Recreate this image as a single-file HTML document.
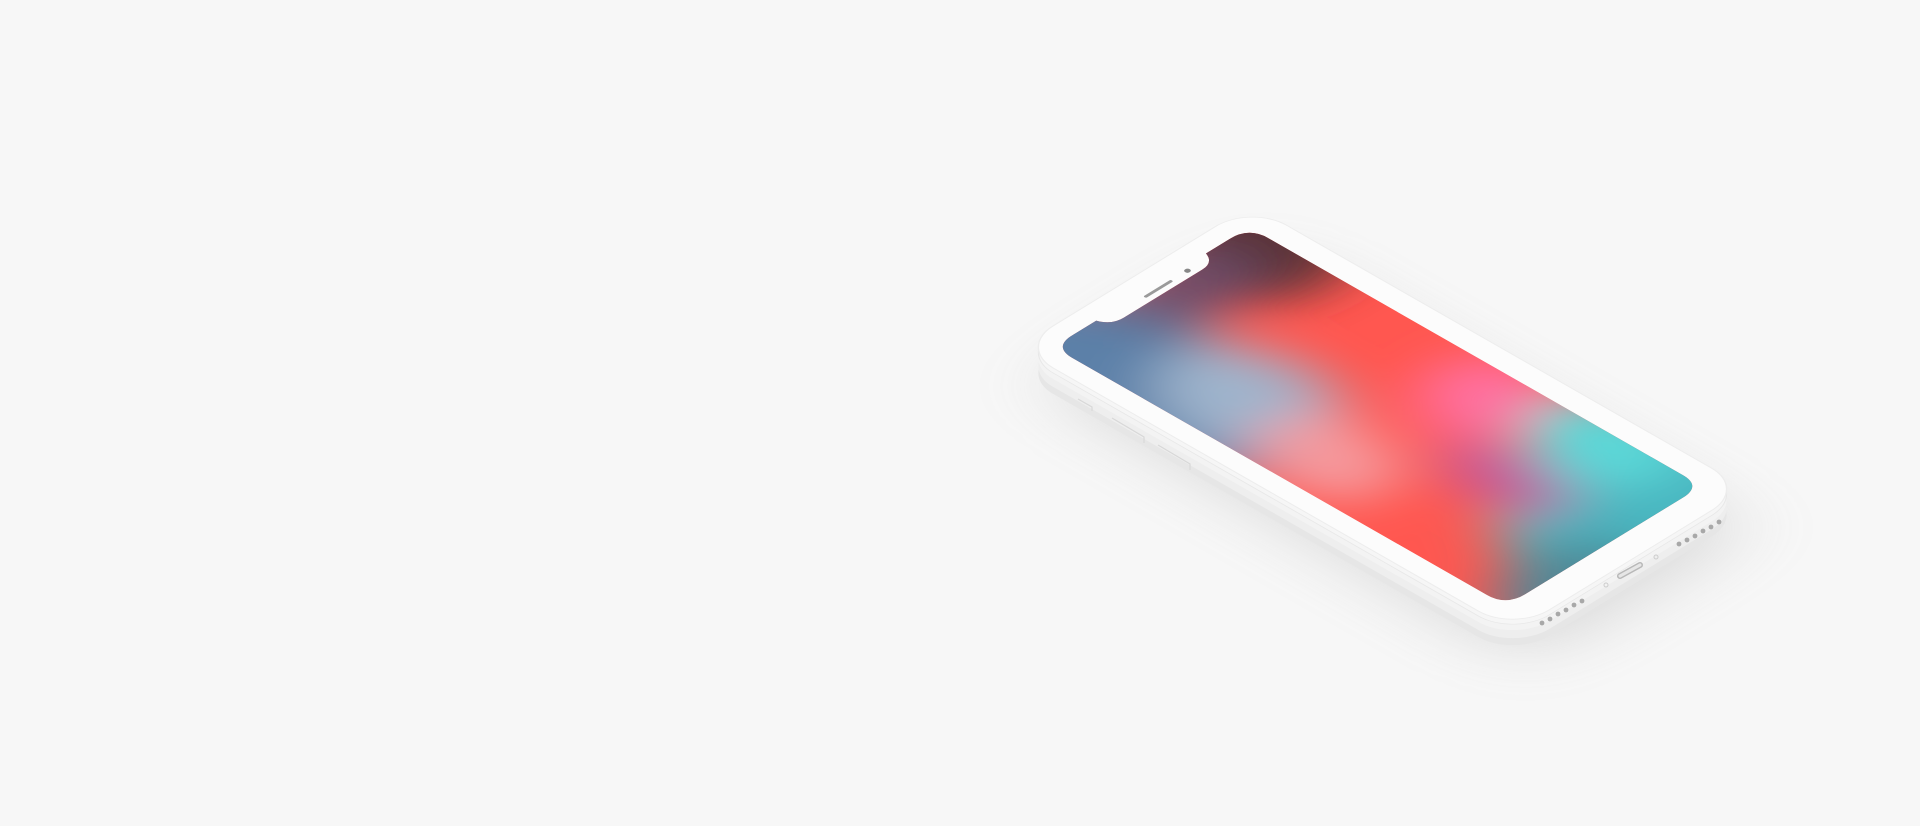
<!DOCTYPE html>
<html><head><meta charset="utf-8"><style>
html,body{margin:0;padding:0;background:#f7f7f7;width:1920px;height:826px;overflow:hidden}
svg{position:absolute;left:0;top:0}
</style></head><body>
<svg width="1920" height="826" viewBox="0 0 1920 826">
<defs>
<filter id="sh" x="-50%" y="-50%" width="200%" height="200%"><feGaussianBlur stdDeviation="16"/></filter>
<filter id="bl" x="-50%" y="-50%" width="200%" height="200%"><feGaussianBlur stdDeviation="12"/></filter>
<clipPath id="scr"><path d="M0,10 Q0,0 10,0 L22,0 Q24,6 30,6 L70,6 Q76,6 78,0 L90,0 Q100,0 100,10 L100,220 Q100,230 90,230 L10,230 Q0,230 0,220 Z"/></clipPath>
</defs>
<g transform="matrix(1.96,-1.2,1.97,1.126,1060,385)" opacity="0.28">
<rect x="-4" y="-4" width="112" height="246" rx="16" fill="#8a8a8a" filter="url(#sh)"/>
</g>
<g transform="matrix(1.96,-1.2,1.97,1.126,1053,373)">
<rect x="-9" y="-9" width="119" height="252" rx="18" fill="#e6e6e6"/>
</g>
<g transform="matrix(1.96,-1.2,1.97,1.126,1053,366)">
<rect x="-9" y="-9" width="119" height="252" rx="18" fill="#eeeeee"/>
</g>
<g transform="matrix(1.96,-1.2,1.97,1.126,1053,358)">
<rect x="-9" y="-9" width="119" height="252" rx="18" fill="#f3f3f3"/>
</g>
<g transform="matrix(1.96,-1.2,1.97,1.126,1053,352)">
<rect x="-9" y="-9" width="119" height="252" rx="18" fill="#f6f6f6" stroke="#e8e8e8" stroke-width="0.4"/>
</g>
<g transform="matrix(1.96,-1.2,1.97,1.126,1053,347)">
<rect x="-9" y="-9" width="119" height="252" rx="18" fill="#fcfcfc" stroke="#ededed" stroke-width="0.5"/>
<g clip-path="url(#scr)">
<rect x="-10" y="-10" width="120" height="250" fill="#ff5750"/>
<g filter="url(#bl)">
<ellipse cx="5" cy="40" rx="40" ry="70" fill="#5b80a8"/>
<ellipse cx="25" cy="75" rx="28" ry="40" fill="#9fb4cc"/>
<ellipse cx="95" cy="10" rx="35" ry="35" fill="#5a3034"/>
<ellipse cx="60" cy="10" rx="28" ry="18" fill="#6a4d6a"/>
<ellipse cx="20" cy="120" rx="22" ry="30" fill="#f59a9e"/>
<ellipse cx="85" cy="135" rx="25" ry="25" fill="#ff70a0"/>
<ellipse cx="80" cy="230" rx="60" ry="60" fill="#4ab6c0"/>
<ellipse cx="95" cy="185" rx="24" ry="32" fill="#5cd8d8"/>
<ellipse cx="25" cy="240" rx="32" ry="25" fill="#4e8796"/>
<ellipse cx="55" cy="175" rx="14" ry="30" fill="#c05aa0"/>
</g>
</g>
<rect x="44" y="2" width="14" height="1.4" rx="0.7" fill="#9a9a9a"/>
<circle cx="66" cy="2.6" r="1.2" fill="#888"/>
</g>
<g fill="none" stroke="#d8d8d8" stroke-width="1.2">
<path d="M1078,399 l14,8 l0,4"/>
<path d="M1112,418 l32,19 l0,6"/>
<path d="M1158,445 l32,19 l0,6"/>
</g>
<g transform="translate(0,-4)">
<g fill="#a8a8a8">
<circle cx="1542" cy="627" r="2.4"/><circle cx="1550" cy="623" r="2.4"/><circle cx="1558" cy="618" r="2.4"/><circle cx="1566" cy="614" r="2.4"/><circle cx="1574" cy="609" r="2.4"/><circle cx="1582" cy="605" r="2.4"/>
<circle cx="1679" cy="548" r="2.4"/><circle cx="1687" cy="544" r="2.4"/><circle cx="1695" cy="540" r="2.4"/><circle cx="1703" cy="535" r="2.4"/><circle cx="1711" cy="531" r="2.4"/><circle cx="1719" cy="526" r="2.4"/>
</g>
<path d="M1620,580 l20,-11" stroke="#b8b8b8" stroke-width="6" stroke-linecap="round"/>
<path d="M1620,580 l20,-11" stroke="#e6e6e6" stroke-width="3" stroke-linecap="round"/>
<circle cx="1606" cy="589" r="2" fill="none" stroke="#ccc"/>
<circle cx="1656" cy="561" r="2" fill="none" stroke="#ccc"/>
</g>
</svg>
</body></html>
